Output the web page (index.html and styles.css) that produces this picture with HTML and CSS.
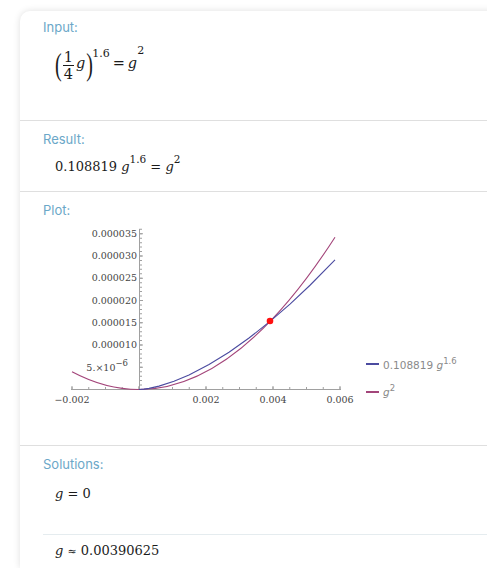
FILE: index.html
```html
<!DOCTYPE html>
<html lang="en">
<head>
    <meta charset="UTF-8">
    <meta name="viewport" content="width=device-width, initial-scale=1.0">
    <title>(1/4 g)^1.6 = g^2</title>
    <link rel="stylesheet" href="styles.css">
</head>
<body>
    <div class="page">
        <div class="card">
            <section class="pod pod-input">
                <div class="pod-label">Input:</div>
                <div class="math math-input">
                    <span class="paren">(</span>
                    <span class="frac"><span class="num">1</span><span class="den">4</span></span>
                    <i class="term frac-g">g</i>
                    <span class="paren paren-close">)</span>
                    <span class="sup sup-paren">1.6</span>
                    <span class="term eq">=</span>
                    <i class="term">g</i>
                    <span class="sup sup-g">2</span>
                </div>
            </section>

            <section class="pod pod-result">
                <div class="pod-label">Result:</div>
                <div class="math math-result">0.108819 <i>g</i><sup>1.6</sup> = <i>g</i><sup>2</sup></div>
            </section>

            <section class="pod pod-plot">
                <div class="pod-label">Plot:</div>
                <!-- plot drawn in page coordinates: x = 139 + 33500*g, y = 390.5 - 4.45e6*v -->
                <svg class="plot" width="444" height="214" viewBox="43 222 444 214">
                    <g stroke="#a0a0a0" fill="none">
                        <line x1="71" y1="390.5" x2="341" y2="390.5" stroke-width="1"/>
                        <line x1="139.5" y1="229.8" x2="139.5" y2="391" stroke-width="1"/>
                        <!-- minor / major ticks -->
                        <line x1="71.5" y1="389" x2="341" y2="389" stroke-width="2" stroke-dasharray="1 15.75"/>
                        <line x1="71.5" y1="388.5" x2="341" y2="388.5" stroke-width="3" stroke-dasharray="1 66"/>
                        <line x1="141" y1="229.8" x2="141" y2="387" stroke-width="2" stroke-dasharray="1 3.45"/>
                        <line x1="141.5" y1="234.25" x2="141.5" y2="370" stroke-width="3" stroke-dasharray="1 21.25"/>
                    </g>
                    <g class="tick-labels" text-anchor="end">
                        <text x="137" y="238">0.000035</text>
                        <text x="137" y="260">0.000030</text>
                        <text x="137" y="282">0.000025</text>
                        <text x="137" y="305">0.000020</text>
                        <text x="137" y="327">0.000015</text>
                        <text x="137" y="349">0.000010</text>
                        <text x="128" y="372">5.×10<tspan dy="-5" font-size="8.5">−6</tspan></text>
                    </g>
                    <g class="tick-labels" text-anchor="middle">
                        <text x="72" y="404">−0.002</text>
                        <text x="206" y="404">0.002</text>
                        <text x="273" y="404">0.004</text>
                        <text x="340" y="404">0.006</text>
                    </g>
                    <path d="M72 372.7 Q203.5 442.57 335 238.18" fill="none" stroke="#a3457a" stroke-width="1.1"/>
                    <polyline points="139,390.5 144,390.13 149,389.39 159,387.14 174,382.27 189,375.94 209,365.53 229,353.19 249,339.05 270,322.44 290,305.07 310,286.26 335,260.94" fill="none" stroke="#4b4ba0" stroke-width="1.1"/>
                    <circle cx="270" cy="322" r="3.3" fill="#ff1010"/>

                    <line x1="366" y1="365" x2="379" y2="365" stroke="#4b4ba0" stroke-width="2"/>
                    <text class="legend" x="383" y="370">0.108819 <tspan font-style="italic">g</tspan><tspan dy="-5" font-size="8.5">1.6</tspan></text>
                    <line x1="366" y1="393" x2="379" y2="393" stroke="#a3457a" stroke-width="2"/>
                    <text class="legend" x="383" y="397"><tspan font-style="italic">g</tspan><tspan dy="-5" font-size="8.5">2</tspan></text>
                </svg>
            </section>

            <section class="pod pod-solutions">
                <div class="pod-label">Solutions:</div>
                <div class="math solution"><i>g</i> = 0</div>
                <div class="math solution"><i>g</i> <span class="approx">≈</span> 0.00390625</div>
            </section>
        </div>
    </div>
</body>
</html>
```

FILE: styles.css
```css
body {
    margin: 0;
    background: #fff;
    overflow: hidden;
}

.page {
    padding: 11px 0 0 20px;
}

/* result card, runs off the right edge */
.card {
    width: calc(100% + 20px);
    min-height: calc(100vh - 11px);
    background: #fff;
    border-radius: 10px 0 0 0;
    box-shadow: 0 0 7px rgba(0, 0, 0, 0.13);
}

.pod {
    box-sizing: border-box;
    padding: 10px 0 0 23px;
    border-bottom: 1px solid #dfdfdf;
}

.pod-input {
    height: 110px;
    padding-top: 8px;
}

.pod-result {
    height: 71px;
}

.pod-plot {
    height: 254px;
}

.pod-solutions {
    border-bottom: none;
}

.pod-label {
    font: 13px/16px Inter, sans-serif;
    color: #6ba7c8;
}

.math {
    font-family: "DejaVu Serif", serif;
    font-size: 13px;
    line-height: 20px;
    color: #1b1b1b;
    padding-left: 12px;
}

.math sup {
    font-size: 10.5px;
    line-height: 0;
    vertical-align: 8px;
}

/* input pod: a row of boxes, each dropped from the row top */
.math-input {
    display: flex;
    align-items: flex-start;
    margin-top: 6px;
    font-size: 14.5px;
}

.paren {
    font-family: "Liberation Serif", serif;
    font-size: 20px;
    line-height: 30px;
    margin-top: 7.5px;
    transform: scaleY(1.55);
}

.paren-close {
    width: 6px;
}

.frac {
    display: flex;
    flex-direction: column;
    text-align: center;
    margin: 9px 2px 0 1px;
}

.frac .num,
.frac .den {
    line-height: 14px;
    padding: 0 1px;
}

.frac .num {
    border-bottom: 1px solid #1b1b1b;
    padding-bottom: 1px;
}

.frac .den {
    padding-top: 1px;
}

.term {
    margin-top: 12px;
}

.frac-g {
    margin-right: 1px;
}

.eq {
    margin: 12px 3px 0 3px;
}

.sup {
    font-size: 11px;
    line-height: 12px;
}

.sup-paren {
    margin-top: 7px;
}

.sup-g {
    margin-top: 4px;
}

/* result pod */
.math-result {
    margin-top: 10px;
}

/* plot */
.plot {
    display: block;
    margin-top: 3px;
}

.tick-labels {
    font-family: "DejaVu Serif", serif;
    font-size: 9.5px;
    fill: #454545;
}

.legend {
    font-family: "DejaVu Sans", sans-serif;
    font-size: 10.5px;
    fill: #8a8a8a;
}

/* solutions */
.solution {
    padding: 12px 0 30px 12px;
}

.solution + .solution {
    border-top: 1px solid #e5ecef;
    padding-top: 6px;
    padding-bottom: 0;
}

.approx {
    font-size: 11px;
}
```
